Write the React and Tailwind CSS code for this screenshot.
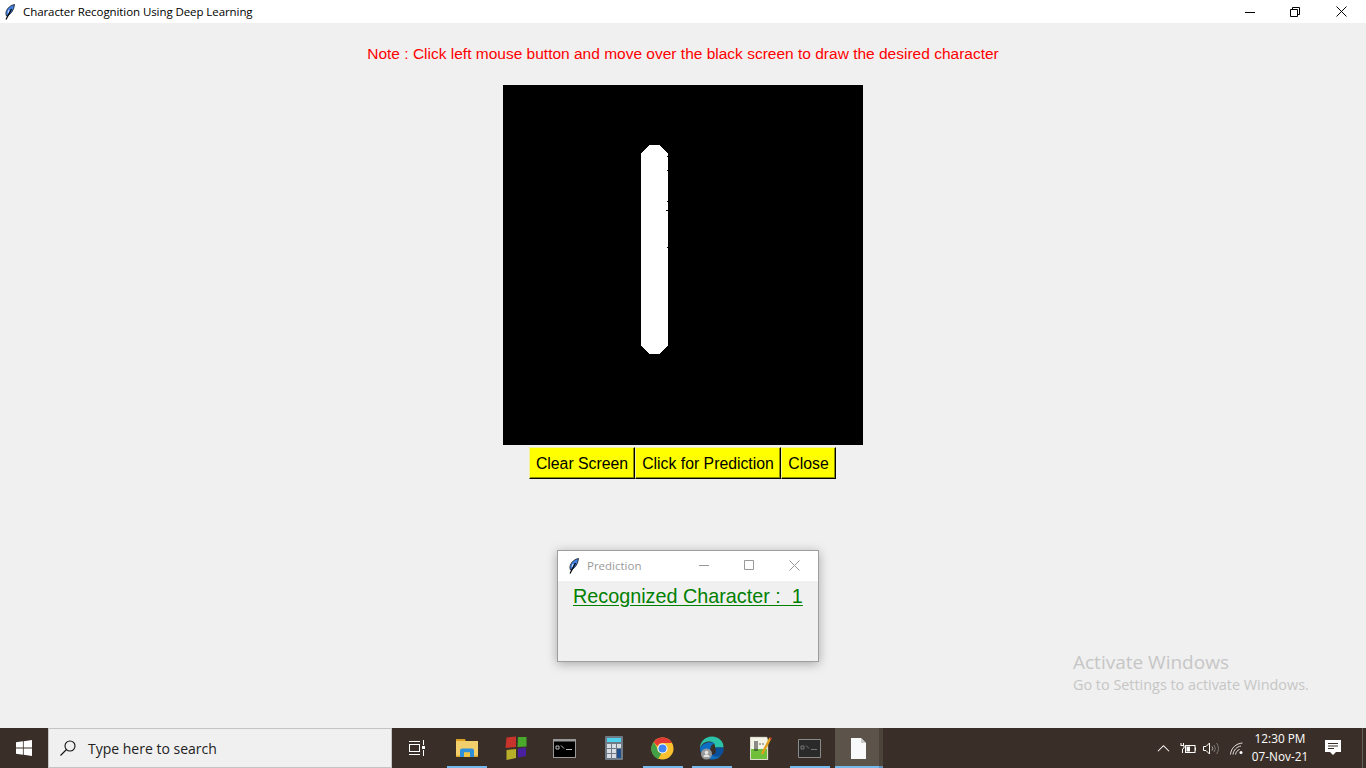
const uiFont = "font-['Open_Sans','Noto_Sans',sans-serif]";
const tkFont = "font-['Liberation_Sans',Arial,sans-serif]";

function Feather({ className }) {
  return (
    <svg viewBox="0 0 10 16" className={className}>
      <path d="M9.500 .5C6 1 2.500 3.500 1.200 7.500c-.5 1.800-.3 3 .3 4.500l1.500-.5C6.500 9.500 9 5.500 9.500 .5z" fill="#3f7fe0" stroke="#1a1a1a" strokeWidth=".8" />
      <path d="M6.500 5L1 15.500" stroke="#000" strokeWidth="1.200" fill="none" />
      <path d="M4 6l-1 3" stroke="#cfe2ff" strokeWidth="1" fill="none" />
    </svg>
  );
}

function StartLogo() {
  return (
    <svg viewBox="0 0 16 16" className="w-4 h-4" fill="#fff">
      <path d="M0 2.300l6.900-1v6.300H0zM7.700 1.200L16 0v7.600H7.700zM0 8.400h6.900v6.300l-6.900-1zM7.700 8.400H16V16l-8.300-1.200z" />
    </svg>
  );
}

function TaskViewIcon() {
  return (
    <svg viewBox="0 0 18 16" className="w-[18px] h-4" fill="none" stroke="#fff" strokeWidth="1">
      <path d="M1 1.500h11M1 14.500h11" />
      <rect x="1.500" y="4.500" width="10" height="7" />
      <path d="M15.500 0v5M15.500 10v6" />
      <rect x="14" y="6" width="3" height="3" fill="#fff" stroke="none" />
    </svg>
  );
}

function ExplorerIcon() {
  return (
    <svg viewBox="0 0 22 18" className="w-[22px] h-[18px]">
      <path d="M0 0h9l1 2.500H0z" fill="#d9a021" />
      <rect x="0" y="2" width="22" height="16" fill="#f3cf6b" />
      <rect x="0" y="16.500" width="22" height="1.500" fill="#e0a92b" />
      <path d="M4 18v-6.500a2 2 0 012-2h10a2 2 0 012 2V18h-4v-4.500H8V18z" fill="#2f8fd8" />
      <rect x="8" y="13.500" width="6" height="4.500" fill="#f0c445" />
    </svg>
  );
}

function ColorTilesIcon() {
  return (
    <svg viewBox="0 0 22 24" className="w-[22px] h-6">
      <path d="M1.500 1.500L11 .5V11L.5 12z" fill="#c8332b" />
      <path d="M13 1h8.500v9.500L12.500 11z" fill="#4aa82c" />
      <path d="M1.500 14l9.500-1v9L1.500 24z" fill="#b9b02a" />
      <path d="M13 12.500l8-1v8.500l-8 1.500z" fill="#4a1fa0" />
    </svg>
  );
}

function CmdIcon({ dim }) {
  return (
    <svg viewBox="0 0 23 19" className="w-[23px] h-[19px]">
      <rect width="23" height="19" fill={dim ? "#8a8a8a" : "#9a9a9a"} rx={dim ? 1 : 0} />
      <rect x="1" y={dim ? 1 : 2.5} width="21" height={dim ? 17 : 15.5} fill={dim ? "#2a2a2a" : "#000"} />
      <path d="M3 7h3v3H3zM8 6.500l3 3M13 10.500h6" stroke={dim ? "#777" : "#bbb"} strokeWidth="1" fill="none" />
    </svg>
  );
}

function CalcIcon() {
  return (
    <svg viewBox="0 0 18 24" className="w-[18px] h-6">
      <rect width="18" height="24" rx="1" fill="#6e7a85" />
      <rect x="2" y="2" width="14" height="4" fill="#4fd1ee" />
      <g fill="#d7dde2">
        <rect x="2" y="8" width="4" height="4" />
        <rect x="7" y="8" width="4" height="4" />
        <rect x="12" y="8" width="4" height="4" />
        <rect x="2" y="13" width="4" height="4" />
        <rect x="7" y="13" width="4" height="4" />
        <rect x="2" y="18" width="4" height="4" />
        <rect x="7" y="18" width="4" height="4" />
      </g>
      <rect x="12" y="13" width="4" height="9" fill="#1f4f8f" />
    </svg>
  );
}

function ChromeIcon() {
  return (
    <svg viewBox="0 0 24 24" className="w-[23px] h-[23px]">
      <circle cx="12" cy="12" r="11.500" fill="#fbc02d" />
      <path d="M12 .5a11.500 11.500 0 019.960 5.750H12a5.750 5.750 0 00-5.300 3.500L2.800 5.100A11.500 11.500 0 0112 .5z" fill="#e53935" />
      <path d="M2.800 5.100l4 6.900a5.500 5.500 0 004 5.300l-3.400 5.700A11.500 11.500 0 012.800 5.100z" fill="#43a047" />
      <circle cx="12" cy="12" r="5.300" fill="#fff" />
      <circle cx="12" cy="12" r="4.200" fill="#4285f4" />
    </svg>
  );
}

function EdgeIcon() {
  return (
    <svg viewBox="0 0 24 24" className="w-6 h-6">
      <path d="M12 .5C5 .5 0 6 0 12c2-5 6-7 10-6.500 4 .5 5.500 3.500 5 6h8.500C24 6 19 .5 12 .5z" fill="#2bc3a8" />
      <path d="M0 12c0 6.500 5 11.500 12 11.500 4 0 7-1.500 9-4-3 1.500-7 1-9-1-2-2-2.500-5-1-8 1-2 3-3 4.500-2.500C13 5.500 5 4.500 0 12z" fill="#0d6fc4" />
      <path d="M15.500 11.500h8c.5 3-.5 6-2.500 8-3 1.500-7 1-9-1 2 .5 5-1 3.500-7z" fill="#0a4f9c" />
      <circle cx="6.500" cy="18" r="5.500" fill="#9a9a9a" />
      <circle cx="6.500" cy="16.500" r="1.800" fill="#e6e6e6" />
      <path d="M3.500 21c.5-2 1.500-2.500 3-2.500s2.500.5 3 2.500z" fill="#e6e6e6" />
    </svg>
  );
}

function NotepadIcon() {
  return (
    <svg viewBox="0 0 22 24" className="w-[22px] h-6">
      <path d="M0 1h17l1 3v20H0z" fill="#f3f3e6" stroke="#9a9a8a" strokeWidth=".5" />
      <rect x="1" y="13" width="16" height="10" fill="#6fbf3a" />
      <path d="M5 5v10M7 5v10" stroke="#222" strokeWidth="1" />
      <path d="M9 8h2M12 8h2" stroke="#666" strokeWidth="1" />
      <path d="M20.500 2L12 18" stroke="#e0a020" strokeWidth="2.500" />
      <path d="M20.500 1.500l.8.5-.8 1.500z" fill="#c0392b" stroke="#c0392b" />
    </svg>
  );
}

function DocIcon() {
  return (
    <svg viewBox="0 0 15 21" className="w-[15px] h-[21px]">
      <path d="M0 0h10l5 5v16H0z" fill="#f8f9fb" />
      <path d="M10 0l5 5h-5z" fill="#c9c9c9" />
    </svg>
  );
}

function TrayIcons() {
  return (
    <>
      <svg viewBox="0 0 14 8" className="w-[13px] h-2" fill="none" stroke="#fff" strokeWidth="1.100">
        <path d="M1 7.500l6-6 6 6" />
      </svg>
      <svg viewBox="0 0 16 11" className="w-4 h-[11px] ml-[10px]" fill="none" stroke="#fff" strokeWidth="1">
        <rect x="5.500" y="2.500" width="9.500" height="7" />
        <rect x="6.500" y="3.500" width="3.500" height="5" fill="#fff" stroke="none" />
        <rect x="15" y="4.500" width="1" height="3" fill="#fff" stroke="none" />
        <path d="M1 0v2M3.500 0v2M.5 2.500h3.500v2.500l-1.500 1v4" />
      </svg>
      <svg viewBox="0 0 16 13" className="w-4 h-[13px] ml-[7px]" fill="none" stroke="#fff" strokeWidth="1">
        <path d="M.5 4.500h2.500l3.500-3.500v11L3 8.500H.5z" />
        <path d="M9 4.500a3 3 0 010 4" stroke="#aaa" />
        <path d="M11 3a5.500 5.500 0 010 7M13.500 1a8.500 8.500 0 010 11" stroke="#777" />
      </svg>
      <svg viewBox="0 0 14 13" className="w-[14px] h-[13px] ml-[11px]" fill="none" stroke="#ddd" strokeWidth="1">
        <path d="M.5 12.500C1 6 6 1.500 12.500 1" />
        <path d="M3 12.500C3.500 8 7 4.500 11 4" />
        <path d="M5.500 12.500C6 10 7.500 8 9.500 7.500" />
        <circle cx="11" cy="10.500" r="1.500" fill="#fff" stroke="none" />
      </svg>
    </>
  );
}

function NotificationIcon() {
  return (
    <svg viewBox="0 0 16 16" className="w-4 h-4">
      <path d="M0 0h16v12h-5l-3 3-3-3H0z" fill="#fff" />
      <path d="M3 3.500h10M3 6h10M3 8.500h6" stroke="#3a2f28" strokeWidth="1" />
    </svg>
  );
}

const taskItems = [
  { icon: <ExplorerIcon />, bar: true },
  { icon: <ColorTilesIcon /> },
  { icon: <CmdIcon /> },
  { icon: <CalcIcon /> },
  { icon: <ChromeIcon />, bar: true },
  { icon: <EdgeIcon />, bar: true },
  { icon: <NotepadIcon /> },
  { icon: <CmdIcon dim />, bar: true },
  { icon: <DocIcon />, bar: true, active: true },
];

const btnClass = "bg-[#ffff00] pt-px border border-t-[#f4f4a0] border-l-[#f4f4a0] border-r-black border-b-black shadow-[inset_-1px_-1px_0_#8f8f00]";

export default function App() {
  return (
    <div className={`relative w-[1366px] h-[768px] overflow-hidden flex flex-col bg-[#f0f0f0] ${uiFont}`}>
      {/* main window title bar */}
      <div className="h-[23px] bg-white flex items-center shrink-0">
        <Feather className="w-[10px] h-4 ml-[5px]" />
        <span className="ml-[8px] text-[11.500px] text-black tracking-[-0.08px]">Character Recognition Using Deep Learning</span>
        <div className="ml-auto flex items-center pr-[19px] gap-[35px]">
          <svg viewBox="0 0 10 10" className="w-[10px] h-[10px]" stroke="#000" strokeWidth="1"><path d="M0 5.500h10" /></svg>
          <svg viewBox="0 0 10 10" className="w-[10px] h-[10px]" stroke="#000" strokeWidth="1" fill="none"><path d="M.5 2.500h7v7h-7zM2.500 2.500v-2h7v7h-2" /></svg>
          <svg viewBox="0 0 11 11" className="w-[11px] h-[11px] ml-px" stroke="#000" strokeWidth="1"><path d="M.5 .5l10 10M10.500 .5l-10 10" /></svg>
        </div>
      </div>

      {/* tkinter content */}
      <div className={`flex-1 flex flex-col items-center ${tkFont}`}>
        <p className="mt-[22px] h-[18px] leading-[18px] text-[15.500px] text-[#ff0000]">
          Note : Click left mouse button and move over the black screen to draw the desired character
        </p>
        <div className="mt-[22px] w-[360px] h-[360px] bg-black shrink-0">
          <svg viewBox="0 0 360 360" className="w-[360px] h-[360px] block" shapeRendering="crispEdges">
            <path
              d="M146 60h10l9 9v2h-1v1h1v13h-1v1h1v30h-1v1h1v8h-2v1h2v36h-1v1h1v97l-9 9h-10l-8-9V69z"
              fill="#fff"
            />
          </svg>
        </div>
        <div className="mt-[2px] mr-px flex h-8 text-[15.800px] text-black">
          <button className={`w-[106px] ${btnClass}`}>Clear Screen</button>
          <button className={`w-[146px] ${btnClass}`}>Click for Prediction</button>
          <button className={`w-[55px] ${btnClass}`}>Close</button>
        </div>
      </div>

      {/* Prediction dialog, floats over the main window */}
      <div className="absolute left-[557px] top-[550px] w-[262px] h-[112px] bg-[#f0f0f0] border border-[#9e9e9e] shadow-[0_2px_10px_rgba(0,0,0,0.3)] flex flex-col">
        <div className="h-[30px] bg-white flex items-center shrink-0">
          <Feather className="w-[10px] h-4 ml-[11px]" />
          <span className="ml-[8px] text-[11.500px] text-[#9a9a9a]">Prediction</span>
          <div className="ml-auto mb-[2px] flex items-center pr-[18px] gap-[35px]">
            <svg viewBox="0 0 10 10" className="w-[10px] h-[10px]" stroke="#999" strokeWidth="1"><path d="M0 5.500h10" /></svg>
            <svg viewBox="0 0 10 10" className="w-[10px] h-[10px]" stroke="#999" strokeWidth="1" fill="none"><path d="M.5 .5h9v9h-9z" /></svg>
            <svg viewBox="0 0 11 11" className="w-[11px] h-[11px]" stroke="#999" strokeWidth="1"><path d="M.5 .5l10 10M10.500 .5l-10 10" /></svg>
          </div>
        </div>
        <p className={`ml-[15px] mt-[4px] text-[19.800px] leading-[23px] text-[#008000] underline underline-offset-2 whitespace-pre ${tkFont}`}>
          {"Recognized Character :  1"}
        </p>
      </div>

      {/* watermark */}
      <div className="absolute left-[1073px] top-[649px] text-[#c6c6c6]">
        <p className="text-[19px] leading-[26px]">Activate Windows</p>
        <p className="text-[14.400px] leading-[20px]">Go to Settings to activate Windows.</p>
      </div>

      {/* taskbar */}
      <div className="h-10 shrink-0 bg-[#3a2f28] flex items-stretch text-white">
        <div className="w-12 flex items-center justify-center"><StartLogo /></div>
        <div className="w-[344px] bg-[#f0f0f0] border border-[#c4c4c4] flex items-center">
          <svg viewBox="0 0 16 16" className="w-4 h-4 ml-[11px]" fill="none" stroke="#111" strokeWidth="1.100">
            <circle cx="10" cy="6" r="5" />
            <path d="M6.500 9.500L.5 15.500" />
          </svg>
          <span className="ml-[12px] text-[14px] text-[#222]">Type here to search</span>
        </div>
        <div className="w-[49px] flex items-center justify-center"><TaskViewIcon /></div>
        <div className="ml-px flex">
          {taskItems.map((item, idx) => (
            <div
              key={idx}
              className={`relative flex items-center justify-center ${item.active ? "ml-px w-[48px] pl-[2px] bg-[#5c534a] border-r-4 border-r-[#4c433b]" : "w-[49px]"}`}
            >
              {item.icon}
              {item.bar && (
                <div className={`absolute bottom-0 h-[2px] bg-[#76b9ed] ${item.active ? "left-0 right-0 shadow-[4px_0_0_#5f93bb]" : "left-[5px] right-[4px]"}`} />
              )}
            </div>
          ))}
        </div>
        <div className="ml-auto flex items-center">
          <TrayIcons />
          <div className="ml-[2px] mb-[2px] w-[68px] text-center text-[11.800px] leading-[18px] text-white">
            <div>12:30 PM</div>
            <div>07-Nov-21</div>
          </div>
          <div className="w-[48px] pr-[10px] flex items-center justify-center"><NotificationIcon /></div>
          <div className="w-[4px] h-full border-l border-[#6a6058]" />
        </div>
      </div>
    </div>
  );
}
